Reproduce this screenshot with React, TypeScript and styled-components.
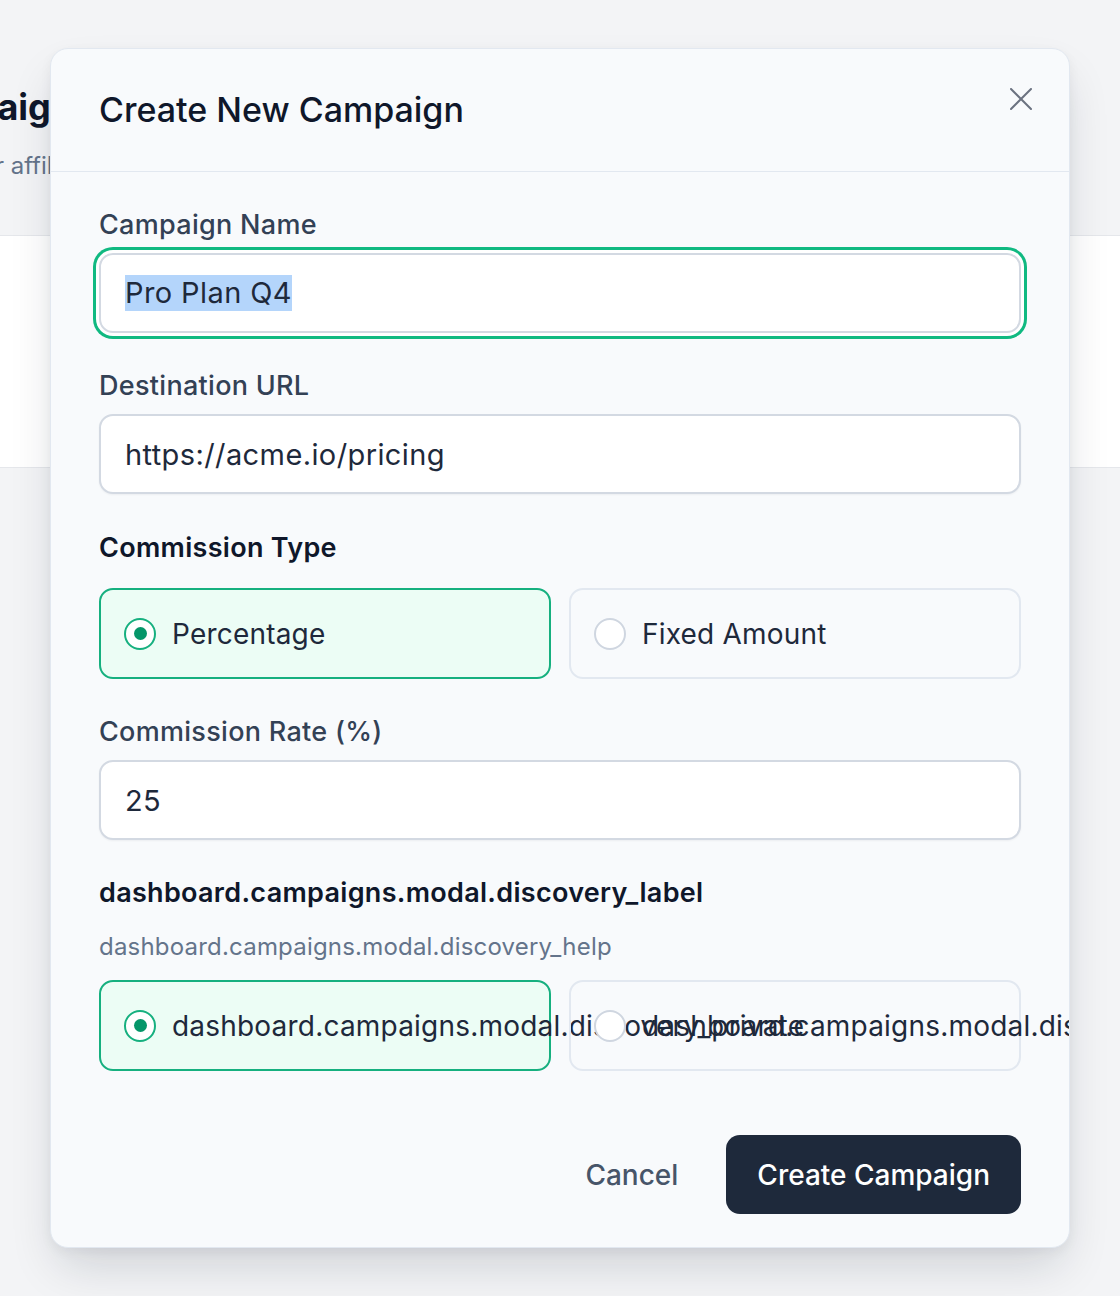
import React from 'react'
import styled, { createGlobalStyle } from 'styled-components'

const GlobalStyle = createGlobalStyle`
  html, body {
    margin: 0;
    padding: 0;
  }
  body {
    background: #f3f4f6;
    font-family: Inter, "Noto Sans", "Liberation Sans", sans-serif;
    color: #0f172a;
  }
  * {
    box-sizing: border-box;
  }
`

const Page = styled.div`
  position: relative;
  min-height: 1296px;
  overflow: hidden;
`

const PageHeader = styled.header`
  margin-left: -106px;
  padding-top: 85px;
  height: 235px;
`

const PageTitle = styled.h1`
  margin: 0;
  font-size: 36px;
  line-height: 44px;
  font-weight: 700;
  color: #0f172a;
`

const PageSubtitle = styled.p`
  margin: 21px 0 0 -39px;
  font-size: 24px;
  line-height: 32px;
  color: #64748b;
`

const PageCard = styled.section`
  height: 233px;
  background: #ffffff;
  border-top: 1px solid #e5e7eb;
  border-bottom: 1px solid #e5e7eb;
`

const Modal = styled.div`
  position: absolute;
  top: 48px;
  left: 50px;
  width: 1020px;
  background: #f8fafc;
  border: 1px solid #e2e8f0;
  border-radius: 18px;
  overflow: hidden;
  box-shadow: 0 24px 48px -8px rgba(15, 23, 42, 0.16), 0 4px 12px rgba(15, 23, 42, 0.05);
`

const ModalHeader = styled.div`
  display: flex;
  justify-content: space-between;
  align-items: flex-start;
  padding: 39px 37px 39px 48px;
  border-bottom: 1px solid #e2e8f0;
`

const ModalTitle = styled.h2`
  margin: 0;
  font-size: 34px;
  line-height: 44px;
  font-weight: 500;
  color: #0f172a;
`

const CloseButton = styled.button`
  display: flex;
  padding: 0;
  border: 0;
  background: none;
  color: #6b7280;
  cursor: pointer;
`

const ModalBody = styled.div`
  padding: 36px 48px 0;
`

const Label = styled.div<{ $strong?: boolean; $top?: number; $gap?: number }>`
  margin-top: ${({ $top }) => $top ?? 0}px;
  margin-bottom: ${({ $gap }) => $gap ?? 11}px;
  font-size: 27px;
  line-height: 34px;
  letter-spacing: 0.3px;
  font-weight: ${({ $strong }) => ($strong ? 600 : 500)};
  color: ${({ $strong }) => ($strong ? '#0f172a' : '#334155')};
`

const HelpText = styled.div`
  margin-top: 21px;
  font-size: 24px;
  line-height: 32px;
  letter-spacing: 0.2px;
  color: #64748b;
`

const InputBox = styled.div<{ $focused?: boolean }>`
  display: flex;
  align-items: center;
  height: 80px;
  padding: 0 24px;
  background: #ffffff;
  border: 2px solid #d3d9e2;
  border-radius: 14px;
  font-size: 29px;
  letter-spacing: 0.4px;
  color: #1e293b;
  box-shadow: ${({ $focused }) =>
    $focused
      ? '0 0 0 3px #ffffff, 0 0 0 6px #10b981'
      : '0 1px 2px rgba(15, 23, 42, 0.05)'};
`

const Selected = styled.span`
  background: #b4d5fb;
  line-height: 36px;
`

const OptionGrid = styled.div<{ $top: number }>`
  display: grid;
  grid-template-columns: repeat(2, minmax(0, 1fr));
  gap: 18px;
  margin-top: ${({ $top }) => $top}px;
`

const OptionCard = styled.div<{ $active?: boolean }>`
  display: flex;
  align-items: center;
  gap: 16px;
  min-width: 0;
  height: 91px;
  padding: 0 23px;
  border: 2px solid ${({ $active }) => ($active ? '#16b07f' : '#e2e8f0')};
  border-radius: 14px;
  background: ${({ $active }) => ($active ? '#ecfdf5' : 'transparent')};
  font-size: 28px;
  letter-spacing: 0.2px;
  color: #1e293b;
  white-space: nowrap;
`

const Radio = styled.span<{ $checked?: boolean }>`
  flex: 0 0 32px;
  display: flex;
  align-items: center;
  justify-content: center;
  width: 32px;
  height: 32px;
  border-radius: 50%;
  background: #ffffff;
  border: 2px solid ${({ $checked }) => ($checked ? '#16b07f' : '#cfd6e0')};

  &::after {
    content: '';
    display: ${({ $checked }) => ($checked ? 'block' : 'none')};
    width: 13px;
    height: 13px;
    border-radius: 50%;
    background: #059669;
  }
`

const Footer = styled.div`
  display: flex;
  justify-content: flex-end;
  align-items: center;
  gap: 17px;
  padding: 64px 48px 33px;
`

const Button = styled.button<{ $primary?: boolean }>`
  height: 79px;
  padding: 0 31px;
  border: 0;
  border-radius: 14px;
  font-family: inherit;
  font-size: 28px;
  font-weight: 500;
  background: ${({ $primary }) => ($primary ? '#1e293b' : 'transparent')};
  color: ${({ $primary }) => ($primary ? '#ffffff' : '#475569')};
  cursor: pointer;
`

const CloseIcon = () => (
  <svg width="22" height="22" viewBox="0 0 22 22" fill="none">
    <path d="M1 1L21 21M21 1L1 21" stroke="currentColor" strokeWidth="2" strokeLinecap="round" />
  </svg>
)

export default function App() {
  return (
    <>
      <GlobalStyle />
      <Page>
        <PageHeader>
          <PageTitle>Campaigns</PageTitle>
          <PageSubtitle>Manage your affiliate campaigns</PageSubtitle>
        </PageHeader>
        <PageCard />

        <Modal role="dialog" aria-labelledby="modal-title">
          <ModalHeader>
            <ModalTitle id="modal-title">Create New Campaign</ModalTitle>
            <CloseButton aria-label="Close">
              <CloseIcon />
            </CloseButton>
          </ModalHeader>

          <ModalBody>
            <Label>Campaign Name</Label>
            <InputBox $focused>
              <Selected>Pro Plan Q4</Selected>
            </InputBox>

            <Label $top={36}>Destination URL</Label>
            <InputBox>https://acme.io/pricing</InputBox>

            <Label $strong $top={37} $gap={0}>
              Commission Type
            </Label>
            <OptionGrid $top={23}>
              <OptionCard $active>
                <Radio $checked />
                Percentage
              </OptionCard>
              <OptionCard>
                <Radio />
                Fixed Amount
              </OptionCard>
            </OptionGrid>

            <Label $top={36}>Commission Rate (%)</Label>
            <InputBox>25</InputBox>

            <Label $strong $top={36} $gap={0}>
              dashboard.campaigns.modal.discovery_label
            </Label>
            <HelpText>dashboard.campaigns.modal.discovery_help</HelpText>
            <OptionGrid $top={17}>
              <OptionCard $active>
                <Radio $checked />
                dashboard.campaigns.modal.discovery_private
              </OptionCard>
              <OptionCard>
                <Radio />
                dashboard.campaigns.modal.discovery_public
              </OptionCard>
            </OptionGrid>
          </ModalBody>

          <Footer>
            <Button>Cancel</Button>
            <Button $primary>Create Campaign</Button>
          </Footer>
        </Modal>
      </Page>
    </>
  )
}
